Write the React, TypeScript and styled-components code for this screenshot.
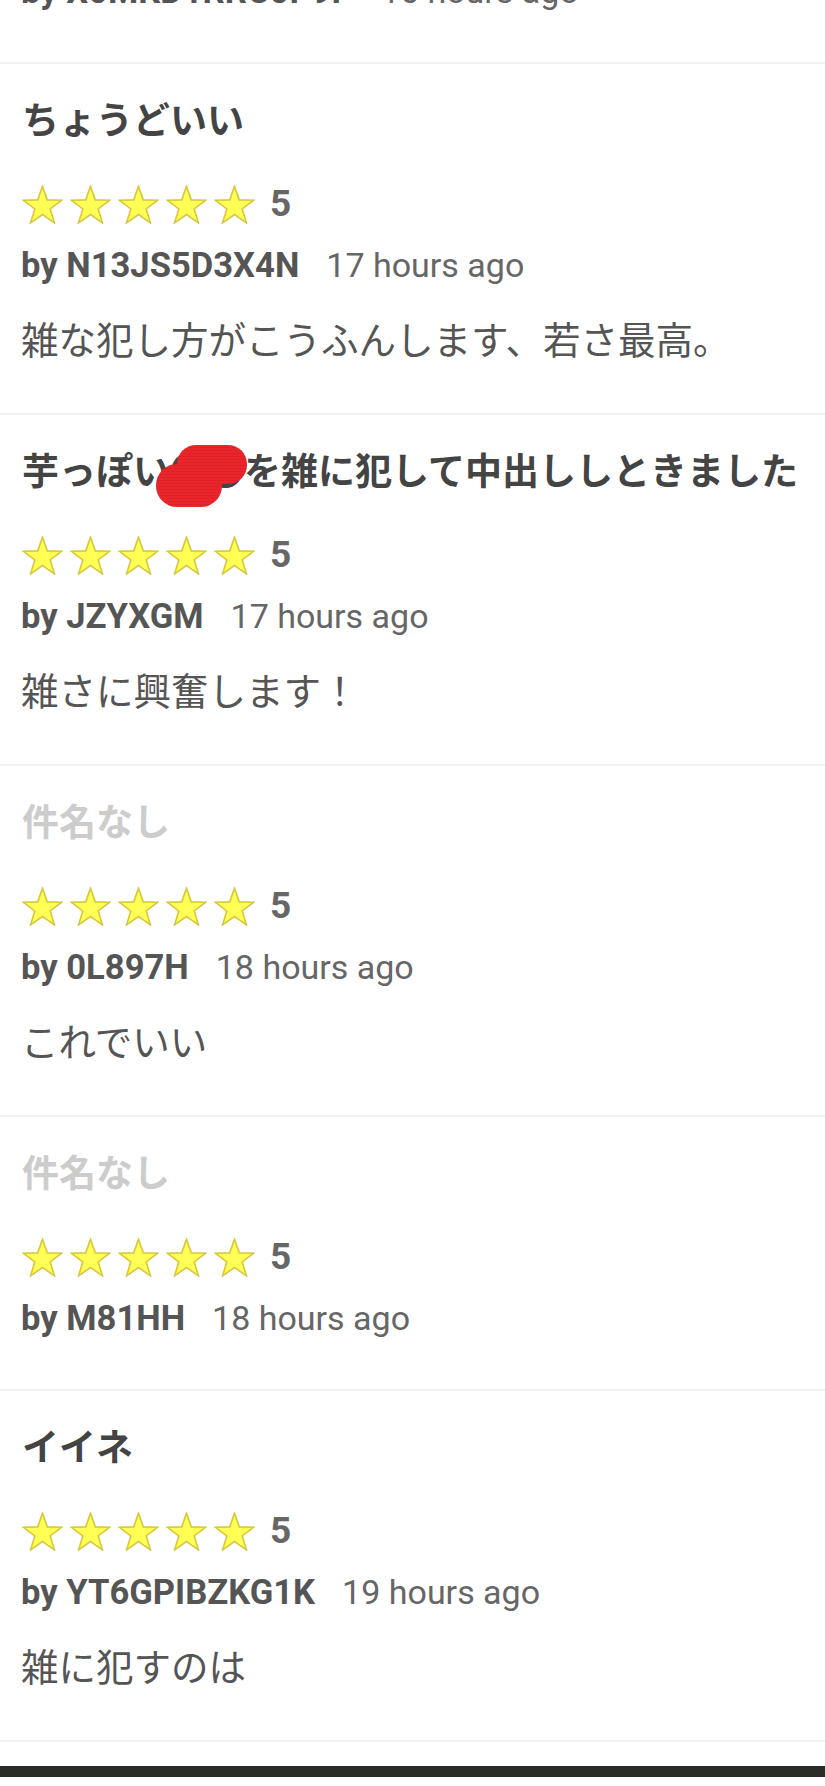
import React from "react";
import styled, { createGlobalStyle } from "styled-components";

const Global = createGlobalStyle`
  html, body {
    margin: 0;
    padding: 0;
    background: #ffffff;
  }
  body {
    font-family: Roboto, "Noto Sans CJK JP", "Noto Sans", sans-serif;
    -webkit-font-smoothing: antialiased;
  }
`;

const Page = styled.main`
  width: 825px;
  overflow: hidden;
`;

const List = styled.ul`
  list-style: none;
  margin: -210px 0 0 0;
  padding: 0;
`;

const Item = styled.li`
  padding: 34px 22px 51px 21px;
  border-bottom: 2px solid #f1f1f1;
`;

const Title = styled.h3<{ $empty?: boolean }>`
  margin: 0 0 0 1px;
  font-family: Roboto, "Noto Sans CJK JP", sans-serif;
  font-size: 37px;
  line-height: 48px;
  font-weight: 700;
  color: ${(p) => (p.$empty ? "#cccccc" : "#444444")};
  white-space: nowrap;
`;

const Redacted = styled.span`
  position: relative;
  display: inline-block;
  width: 2em;
  color: #444;
`;

const Blob = styled.svg`
  position: absolute;
  left: -14px;
  top: -4px;
  width: 92px;
  height: 62px;
`;

const RatingRow = styled.div`
  margin-top: 36px;
  margin-left: 1px;
  height: 44px;
  display: flex;
  align-items: center;
`;

const Stars = styled.div`
  display: flex;
  gap: 7px;
  align-items: center;
`;

const StarSvg = styled.svg`
  width: 41px;
  height: 39px;
  display: block;
`;

const Score = styled.span`
  margin-left: 15px;
  font-family: Roboto, sans-serif;
  font-size: 37px;
  font-weight: 700;
  color: #666666;
  line-height: 44px;
`;

const ByLine = styled.div`
  margin-top: 19px;
  height: 40px;
  display: flex;
  align-items: center;
  gap: 27px;
  font-family: Roboto, sans-serif;
  font-size: 34px;
  line-height: 40px;
  white-space: nowrap;
`;

const Author = styled.span`
  font-size: 34.6px;
  font-weight: 700;
  color: #555555;
`;

const Time = styled.span`
  font-weight: 400;
  color: #666666;
`;

const Comment = styled.p`
  margin: 29px 0 0 0;
  font-family: "Noto Sans CJK JP", sans-serif;
  font-size: 37.5px;
  line-height: 48px;
  font-weight: 400;
  color: #555555;
  white-space: nowrap;
`;

const Footer = styled.footer`
  margin-top: 24px;
  height: 11px;
  background: #2b2c27;
  margin-bottom: 9px;
`;

const Star = () => (
  <StarSvg viewBox="1.4 1.4 21.2 20.2" aria-hidden>
    <polygon
      points="12,2 14.47,9.1 21.99,9.26 15.99,13.8 18.17,20.99 12,16.7 5.83,20.99 8.01,13.8 2.01,9.26 9.53,9.1"
      fill="#ffff55"
      stroke="#d8c83e"
      strokeWidth="0.85"
      strokeLinejoin="miter"
    />
  </StarSvg>
);

type Review = {
  title: React.ReactNode | null;
  author: string;
  time: string;
  comment?: string;
};

const RedactedTitle = () => (
  <>
    芋っぽい
    <Redacted>
      〇〇
      <Blob viewBox="0 0 92 62" aria-hidden>
        <defs>
          <pattern id="scr" width="6" height="3" patternUnits="userSpaceOnUse">
            <rect width="6" height="3" fill="#e9262c" />
            <rect y="2" width="6" height="1" fill="#d81c22" opacity="0.6" />
          </pattern>
        </defs>
        <rect x="21" y="0" width="70" height="39" rx="19" fill="url(#scr)" />
        <rect x="0" y="19" width="66" height="43" rx="21" fill="url(#scr)" />
      </Blob>
    </Redacted>
    を雑に犯して中出ししときました
  </>
);

const reviews: Review[] = [
  { title: "いい", author: "X0MKD1RRC0P9P", time: "16 hours ago" },
  {
    title: "ちょうどいい",
    author: "N13JS5D3X4N",
    time: "17 hours ago",
    comment: "雑な犯し方がこうふんします、若さ最高。",
  },
  {
    title: <RedactedTitle />,
    author: "JZYXGM",
    time: "17 hours ago",
    comment: "雑さに興奮します！",
  },
  { title: null, author: "0L897H", time: "18 hours ago", comment: "これでいい" },
  { title: null, author: "M81HH", time: "18 hours ago" },
  {
    title: "イイネ",
    author: "YT6GPIBZKG1K",
    time: "19 hours ago",
    comment: "雑に犯すのは",
  },
];

export default function App() {
  return (
    <Page>
      <Global />
      <List>
        {reviews.map((r, i) => (
          <Item key={i}>
            <Title $empty={r.title === null}>{r.title ?? "件名なし"}</Title>
            <RatingRow>
              <Stars>
                {[0, 1, 2, 3, 4].map((s) => (
                  <Star key={s} />
                ))}
              </Stars>
              <Score>5</Score>
            </RatingRow>
            <ByLine>
              <Author>by {r.author}</Author>
              <Time>{r.time}</Time>
            </ByLine>
            {r.comment && <Comment>{r.comment}</Comment>}
          </Item>
        ))}
      </List>
      <Footer />
    </Page>
  );
}
